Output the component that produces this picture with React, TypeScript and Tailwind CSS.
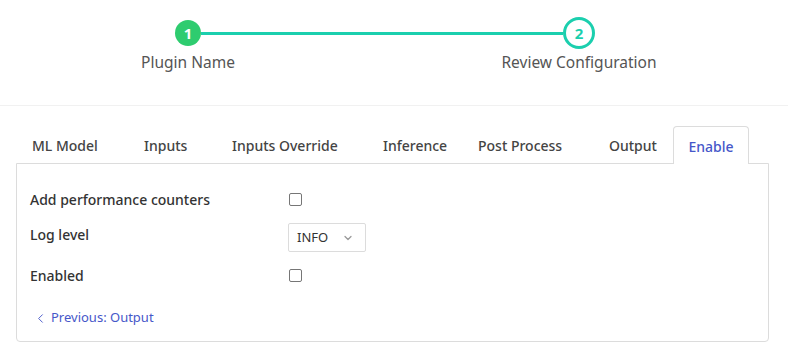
import { ChevronDown, ChevronLeft } from 'lucide-react'

const tabs = [
  { label: 'ML Model', w: 'w-[112px]' },
  { label: 'Inputs', w: 'w-[88px]' },
  { label: 'Inputs Override', w: 'w-[151px]' },
  { label: 'Inference', w: 'w-[95px]' },
  { label: 'Post Process', w: 'w-[131px]' },
  { label: 'Output', w: 'w-[80px]' },
]

function Checkbox() {
  return <span className="block h-[13px] w-[13px] rounded-[2px] border border-[#767676] bg-white" />
}

export default function App() {
  return (
    <div className="min-h-[358px] w-[788px] bg-white font-['Noto_Sans',sans-serif] text-[#333]">
      {/* stepper */}
      <div className="border-b border-[#f1f1f1] pt-[17px] pb-[33px]">
        <div className="flex items-center pl-[175px]">
          <div className="flex h-[26px] w-[26px] items-center justify-center rounded-full bg-[#2ecc6f] text-[15px] font-bold text-white">
            1
          </div>
          <div className="h-[3px] w-[362px] bg-[#1bcfae]" />
          <div className="flex h-[32px] w-[32px] items-center justify-center rounded-full border-[3px] border-[#1bcfae] bg-white text-[15px] font-bold text-[#1bcfae]">
            2
          </div>
        </div>
        <div className="mt-[3px] flex text-[15.5px] leading-[20px] text-[#555]">
          <div className="ml-[88px] w-[200px] text-center">Plugin Name</div>
          <div className="ml-[191px] w-[200px] text-center">Review Configuration</div>
        </div>
      </div>

      {/* tabs + panel */}
      <div className="pt-[20px] pl-[16px] pr-[19px]">
        <div className="flex h-[38px] pt-px text-[14px] font-medium text-[#444]">
          {tabs.map((t) => (
            <div key={t.label} className={`${t.w} flex items-center pl-[16px] whitespace-nowrap`}>
              {t.label}
            </div>
          ))}
          <div className="relative z-10 -mt-px flex w-[76px] items-center justify-center rounded-t-[4px] border border-b-0 border-[#dcdcdc] bg-white pt-px text-[#4657c9]">
            Enable
          </div>
        </div>
        <div className="-mt-px rounded-b-[4px] border border-[#dcdcdc] pt-[22px] pb-[14px] pl-[13px]">
          <div className="flex h-[26px] items-center">
            <div className="w-[259px] text-[14px] font-medium">Add performance counters</div>
            <Checkbox />
          </div>
          <div className="mt-[11px] flex items-start">
            <div className="w-[258px] pt-px text-[14px] leading-[22px] font-medium">Log level</div>
            <div className="flex h-[29px] w-[78px] items-center justify-between rounded-[2px] border border-[#dcdcdc] pr-[11px] pl-[8px] text-[13px] text-[#333]">
              <span>INFO</span>
              <ChevronDown size={12} strokeWidth={2.5} className="text-[#999]" />
            </div>
          </div>
          <div className="mt-[10px] flex h-[26px] items-center">
            <div className="w-[259px] text-[14px] font-medium">Enabled</div>
            <Checkbox />
          </div>
          <div className="mt-[21px] flex h-[18px] items-center pl-[3px] text-[13px] text-[#4657c9]">
            <ChevronLeft size={15} strokeWidth={1.5} />
            <span className="ml-[3px]">Previous: Output</span>
          </div>
        </div>
      </div>
    </div>
  )
}
